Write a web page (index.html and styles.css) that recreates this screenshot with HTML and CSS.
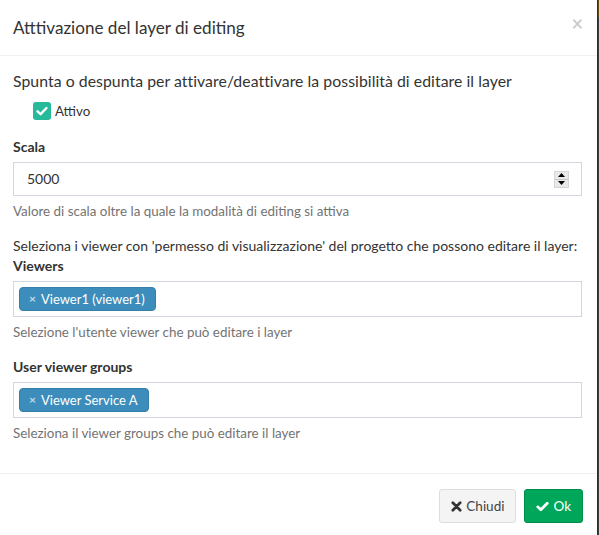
FILE: index.html
```
<!DOCTYPE html>
<html lang="it">
<head>
<meta charset="utf-8">
<title>Attivazione layer editing</title>
<link rel="stylesheet" href="styles.css">
</head>
<body>
<div class="modal">
  <div class="modal-header">
    <span class="close">×</span>
    <h4 class="modal-title">Atttivazione del layer di editing</h4>
  </div>
  <div class="modal-body">
    <p class="intro">Spunta o despunta per attivare/deattivare la possibilità di editare il layer</p>
    <div class="check-row">
      <span class="checkbox"><svg viewBox="0 0 18 18" width="18" height="18"><path d="M4.5 9.3 L7.6 12.2 L13.5 6" fill="none" stroke="#fff" stroke-width="2.4" stroke-linecap="round" stroke-linejoin="round"/></svg></span>
      <span class="check-label">Attivo</span>
    </div>

    <div class="form-group">
      <label class="label">Scala</label>
      <div class="input">
        <span class="input-value">5000</span>
        <span class="spinner">
          <span class="spin-btn"><svg viewBox="0 0 7 4" width="7" height="4"><path d="M0 4 L3.5 0 L7 4Z" fill="#000"/></svg></span>
          <span class="spin-btn"><svg viewBox="0 0 7 4" width="7" height="4"><path d="M0 0 L3.5 4 L7 0Z" fill="#000"/></svg></span>
        </span>
      </div>
      <p class="help">Valore di scala oltre la quale la modalità di editing si attiva</p>
    </div>

    <div class="form-group">
      <p class="text">Seleziona i viewer con 'permesso di visualizzazione' del progetto che possono editare il layer:</p>
      <label class="label">Viewers</label>
      <div class="select">
        <span class="tag"><span class="tag-x">×</span>Viewer1 (viewer1)</span>
      </div>
      <p class="help">Selezione l'utente viewer che può editare i layer</p>
    </div>

    <div class="form-group">
      <label class="label">User viewer groups</label>
      <div class="select">
        <span class="tag"><span class="tag-x">×</span>Viewer Service A</span>
      </div>
      <p class="help">Seleziona il viewer groups che può editare il layer</p>
    </div>
  </div>
  <div class="modal-footer">
    <button class="btn btn-default"><svg viewBox="0 0 12 12" width="11" height="11"><path d="M2 2 L10 10 M10 2 L2 10" stroke="#333" stroke-width="3" stroke-linecap="round"/></svg>Chiudi</button>
    <button class="btn btn-success"><svg viewBox="0 0 14 12" width="13" height="11"><path d="M1.8 6.4 L5.2 9.6 L12.2 2.4" fill="none" stroke="#fff" stroke-width="3" stroke-linecap="round" stroke-linejoin="round"/></svg>Ok</button>
  </div>
</div>
</body>
</html>
```
FILE: styles.css
```
* { box-sizing: border-box; }
html, body {
  margin: 0;
  padding: 0;
}
body {
  background: linear-gradient(#6b4b1a 0, #6b4b1a 17px, #3d3d3d 17px);
  font-family: "Lato", "Liberation Sans", sans-serif;
  font-size: 14px;
  line-height: 20px;
  color: #333;
  width: 599px;
  height: 535px;
  overflow: hidden;
}
.modal {
  margin-left: -2px;
  width: 600px;
  background: #fff;
  border-right: 1px solid #2e2e2e;
  height: 540px;
}
.modal-header {
  padding: 15px;
  border-bottom: 1px solid #f0f0f0;
  height: 56px;
}
.close {
  float: right;
  font-size: 20px;
  font-weight: bold;
  line-height: 1;
  color: #000;
  opacity: 0.2;
  margin-top: -2px;
  margin-right: -1px;
}
.modal-title {
  margin: 0;
  font-size: 17.1px;
  font-weight: normal;
  line-height: 25px;
}
.modal-body {
  padding: 15px;
}
.intro {
  margin: 0 0 10px;
  font-size: 15.8px;
  letter-spacing: 0.05px;
}
.check-row {
  display: flex;
  align-items: center;
  gap: 4px;
  padding-left: 20px;
  height: 20px;
  margin-bottom: 16px;
}
.check-label { font-size: 13.3px; }
.checkbox {
  width: 18px;
  height: 18px;
  border-radius: 3px;
  background: #26b99a;
  display: flex;
}
.form-group { margin-bottom: 15px; }
.label {
  display: block;
  font-weight: bold;
  margin-bottom: 5px;
}
.text { margin: 0; }
.input {
  height: 34px;
  border: 1px solid #d2d6de;
  display: flex;
  align-items: center;
  justify-content: space-between;
  padding: 0 12px 0 13px;
}
.spinner {
  display: flex;
  flex-direction: column;
  width: 15px;
  height: 17px;
  background: #e9e9e9;
  border: 1px solid #d6d6d6;
}
.spin-btn {
  flex: 1;
  display: flex;
  align-items: center;
  justify-content: center;
}
.spin-btn + .spin-btn { border-top: 1px solid #c8c8c8; }
.help {
  margin: 5px 0 0;
  color: #737373;
  font-size: 13.4px;
}
.select {
  height: 36px;
  border: 1px solid #d2d6de;
  padding: 5px;
  display: flex;
  align-items: flex-start;
}
.tag {
  background: #3c8dbc;
  border: 1px solid #367fa9;
  border-radius: 4px;
  color: #fff;
  height: 24px;
  line-height: 22px;
  font-size: 13px;
  padding: 0 10px 0 9px;
  display: inline-flex;
  align-items: center;
}
.tag-x {
  color: rgba(255,255,255,0.7);
  font-weight: bold;
  margin-right: 5px;
  font-size: 12px;
}
.modal-footer {
  border-top: 1px solid #f0f0f0;
  padding: 15px 14px 15px 15px;
  display: flex;
  justify-content: flex-end;
  gap: 8px;
}
.btn {
  height: 34px;
  padding: 6px 11px;
  font-family: inherit;
  font-size: 13.5px;
  line-height: 20px;
  border-radius: 3px;
  display: inline-flex;
  align-items: center;
  gap: 4px;
}
.btn-default {
  background: #f4f4f4;
  border: 1px solid #ddd;
  color: #444;
}
.btn-success {
  background: #00a65a;
  border: 1px solid #008d4c;
  color: #fff;
}
```
